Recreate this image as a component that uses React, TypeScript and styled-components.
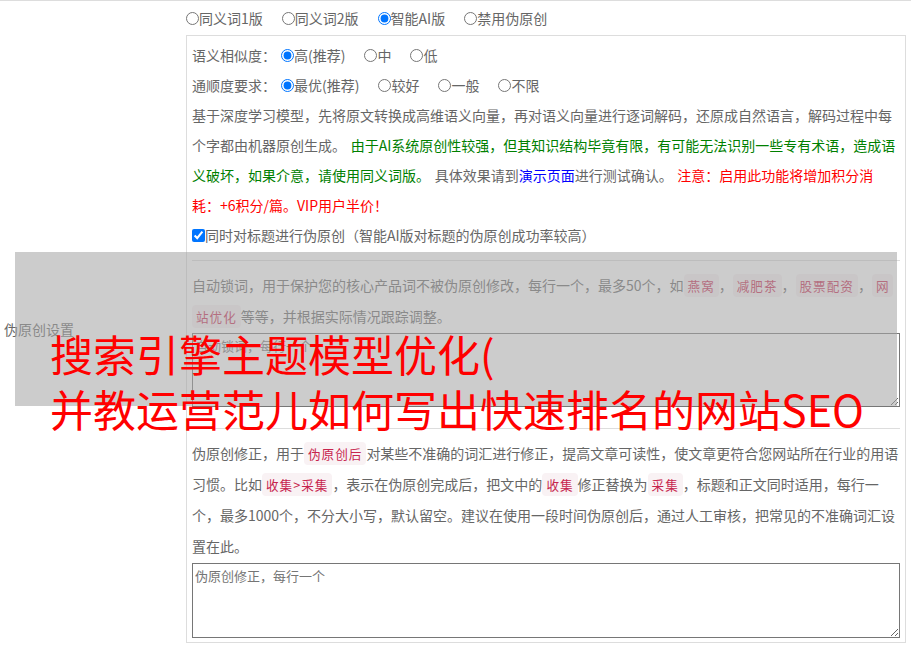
import React from 'react';
import styled, { createGlobalStyle } from 'styled-components';

const GlobalStyle = createGlobalStyle`
  html, body {
    margin: 0;
    padding: 0;
    background: #fff;
  }
  body {
    font-family: 'Noto Sans CJK SC', 'Noto Sans', sans-serif;
    font-size: 14px;
    color: #666;
  }
`;

const Page = styled.div`
  position: relative;
  width: 911px;
  height: 658px;
  overflow: hidden;
`;

const SettingRow = styled.div`
  display: flex;
  border-top: 1px solid #ddd;
`;

const LabelCell = styled.div`
  width: 182px;
  padding-left: 4px;
  display: flex;
  align-items: center;
  color: #666;
  white-space: nowrap;
`;

const ContentCell = styled.div`
  width: 720px;
  padding-bottom: 13px;
`;

const VersionRow = styled.div`
  height: 34px;
  display: flex;
  align-items: center;
`;

const Choice = styled.label`
  display: inline-flex;
  align-items: center;
  margin-right: 19px;
  line-height: 30px;
  white-space: nowrap;
  color: #666;

  input {
    width: 13px;
    height: 13px;
    margin: 0;
    accent-color: #0075ff;
  }
`;

const OptionBox = styled.div`
  border: 1px solid #ddd;
  padding: 4px 5px 4px;
`;

const OptionRow = styled.div`
  display: flex;
  align-items: center;
  height: 30px;
`;

const Prefix = styled.span`
  width: 89px;
  white-space: nowrap;
`;

const Paragraph = styled.div<{ $lh?: number }>`
  line-height: ${p => p.$lh ?? 30}px;
  word-spacing: 1.5px;
  word-break: break-all;
`;

const Green = styled.span`
  color: #008000;
`;

const Blue = styled.span`
  color: #0000ff;
`;

const Red = styled.span`
  color: #ff0000;
`;

const Tag = styled.code`
  font-family: 'Noto Sans CJK SC', sans-serif;
  font-size: 90%;
  letter-spacing: 1px;
  word-spacing: 0;
  padding: 2px 4px;
  color: #c7254e;
  background: #f9f2f4;
  border-radius: 4px;
  -webkit-box-decoration-break: clone;
  box-decoration-break: clone;
`;

const Separator = styled.hr<{ $top: number }>`
  border: 0;
  border-top: 1px solid #ddd;
  margin: ${p => p.$top}px 0 9px;
`;

const TextBox = styled.textarea<{ $h: number }>`
  display: block;
  box-sizing: border-box;
  width: 100%;
  height: ${p => p.$h}px;
  margin: 1px 0 0;
  padding: 2px;
  border: 1px solid #767676;
  font-family: 'Noto Sans CJK SC', sans-serif;
  font-size: 13px;
  color: #333;

  &::placeholder {
    color: #757575;
  }
`;

const Caption = styled.div`
  position: absolute;
  left: 15px;
  top: 252px;
  width: 847px;
  height: 80px;
  padding: 74px 0 0 35px;
  background: rgba(165, 165, 165, 0.57);
  color: #ff0000;
  font-size: 43px;
  line-height: 55px;
  white-space: nowrap;
`;

const versions = ['同义词1版', '同义词2版', '智能AI版', '禁用伪原创'];
const similarity = ['高(推荐)', '中', '低'];
const fluency = ['最优(推荐)', '较好', '一般', '不限'];

const App: React.FC = () => {
  return (
    <Page>
      <GlobalStyle />
      <SettingRow>
        <LabelCell>伪原创设置</LabelCell>
        <ContentCell>
          <VersionRow>
            {versions.map((v, i) => (
              <Choice key={v}>
                <input type="radio" name="ver" defaultChecked={i === 2} />
                {v}
              </Choice>
            ))}
          </VersionRow>

          <OptionBox>
            <OptionRow>
              <Prefix>语义相似度：</Prefix>
              {similarity.map((v, i) => (
                <Choice key={v}>
                  <input type="radio" name="sim" defaultChecked={i === 0} />
                  {v}
                </Choice>
              ))}
            </OptionRow>
            <OptionRow>
              <Prefix>通顺度要求：</Prefix>
              {fluency.map((v, i) => (
                <Choice key={v}>
                  <input type="radio" name="flu" defaultChecked={i === 0} />
                  {v}
                </Choice>
              ))}
            </OptionRow>

            <Paragraph>
              基于深度学习模型，先将原文转换成高维语义向量，再对语义向量进行逐词解码，还原成自然语言，解码过程中每个字都由机器原创生成。{' '}
              <Green>由于AI系统原创性较强，但其知识结构毕竟有限，有可能无法识别一些专有术语，造成语义破坏，如果介意，请使用同义词版。</Green>{' '}
              具体效果请到<Blue>演示页面</Blue>进行测试确认。{' '}
              <Red>注意：启用此功能将增加积分消耗：+6积分/篇。VIP用户半价！</Red>
            </Paragraph>

            <OptionRow>
              <Choice>
                <input type="checkbox" defaultChecked />
                同时对标题进行伪原创（智能AI版对标题的伪原创成功率较高）
              </Choice>
            </OptionRow>

            <Separator $top={10} />

            <Paragraph>
              自动锁词，用于保护您的核心产品词不被伪原创修改，每行一个，最多50个，如<Tag>燕窝</Tag>，<Tag>减肥茶</Tag>，<Tag>股票配资</Tag>，<Tag>网站优化</Tag>等等，并根据实际情况跟踪调整。
            </Paragraph>
            <TextBox $h={74} placeholder="自动锁词，每行一个" />

            <Separator $top={21} />

            <Paragraph $lh={31}>
              伪原创修正，用于<Tag>伪原创后</Tag>对某些不准确的词汇进行修正，提高文章可读性，使文章更符合您网站所在行业的用语习惯。比如<Tag>收集&gt;采集</Tag>，表示在伪原创完成后，把文中的<Tag>收集</Tag>修正替换为<Tag>采集</Tag>，标题和正文同时适用，每行一个，最多1000个，不分大小写，默认留空。建议在使用一段时间伪原创后，通过人工审核，把常见的不准确词汇设置在此。
            </Paragraph>
            <TextBox $h={75} placeholder="伪原创修正，每行一个" />
          </OptionBox>
        </ContentCell>
      </SettingRow>

      <Caption>
        搜索引擎主题模型优化(
        <br />
        并教运营范儿如何写出快速排名的网站SEO
      </Caption>
    </Page>
  );
};

export default App;
